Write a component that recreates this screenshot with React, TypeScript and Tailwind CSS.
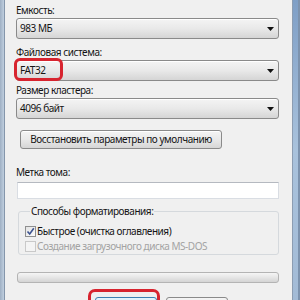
import React from "react";

function Combo({ value, children }: { value: string; children?: React.ReactNode }) {
  return (
    <div className="relative flex h-[21px] items-center rounded-[3px] border border-[#8a8a8a] bg-gradient-to-b from-[#f4f4f4] via-[#e9e9e9] to-[#d5d5d5] pl-[3px] shadow-[inset_0_1px_0_#ffffff]">
      <span>{value}</span>
      <svg className="ml-auto mr-[4px]" width="7" height="4" viewBox="0 0 7 4">
        <path d="M0 0h7L3.5 4z" fill="#111" />
      </svg>
      {children}
    </div>
  );
}

function Label({ text, className }: { text: string; className?: string }) {
  return <div className={`h-[15px] leading-[15px] ${className ?? ""}`}>{text}</div>;
}

function CheckRow({ label, checked, disabled }: { label: string; checked?: boolean; disabled?: boolean }) {
  return (
    <div className="flex h-[13px] items-center">
      <div
        className={
          disabled
            ? "h-[11px] w-[11px] border border-[#c9c9c9] bg-[#f4f4f4]"
            : "flex h-[11px] w-[11px] items-center justify-center border border-[#8f8f8f] bg-gradient-to-br from-[#e4e4e4] to-[#fafafa]"
        }
      >
        {checked && (
          <svg width="9" height="9" viewBox="0 0 9 9">
            <path d="M1.5 4.5 L3.7 7 L7.8 1.3" fill="none" stroke="#3d5390" strokeWidth="1.6" />
          </svg>
        )}
      </div>
      <span className={`ml-[1px] ${disabled ? "text-[#a3a3a3]" : ""}`}>{label}</span>
    </div>
  );
}

export default function App() {
  return (
    <div className="flex h-[300px] w-[300px] overflow-hidden bg-[#f0f0f0] font-['Noto_Sans',sans-serif] text-[10px] tracking-[-0.45px] text-[#141414]">
      {/* left window frame */}
      <div className="flex w-[5px] shrink-0">
        <div className="w-[4px] bg-gradient-to-r from-[#9fb0c4] to-[#c0cfdf]" />
        <div className="w-[1px] bg-[#8596ab]" />
      </div>

      <div className="flex min-w-0 flex-1 flex-col pl-[11px] pr-[13px] *:shrink-0">
        <Label text="Емкость:" className="mt-[3px]" />
        <Combo value="983 МБ" />

        <Label text="Файловая система:" className="mt-[6px]" />
        <Combo value="FAT32">
          <div className="absolute left-[-3px] top-[-3px] h-[23px] w-[49px] rounded-[6px] border-[3px] border-[#d7242f]" />
        </Combo>

        <Label text="Размер кластера:" className="mt-[2px]" />
        <Combo value="4096 байт" />

        <button className="ml-[4px] mt-[11px] flex h-[19px] w-[202px] items-center justify-center rounded-[3px] border border-[#8a8a8a] bg-gradient-to-b from-[#f4f4f4] via-[#e9e9e9] to-[#d6d6d6] shadow-[inset_0_1px_0_#ffffff]">
          Восстановить параметры по умолчанию
        </button>

        <Label text="Метка тома:" className="mt-[16px]" />
        <div className="ml-[1px] mt-[2px] h-[17px] border border-[#d9dde3] border-t-[#b5b9c0] bg-white" />

        <fieldset className="ml-[2px] mt-[5px] rounded-[3px] border border-[#d5d9dd] pb-[1px] pl-[6px]">
          <legend className="ml-[5px] h-[15px] px-[1px] leading-[15px]">Способы форматирования:</legend>
          <div className="mt-[6px] flex flex-col gap-[2px]">
            <CheckRow label="Быстрое (очистка оглавления)" checked />
            <CheckRow label="Создание загрузочного диска MS-DOS" disabled />
          </div>
        </fieldset>

        <div className="ml-[1px] mt-[17px] h-[11px] rounded-[3px] border border-[#b4b4b4] bg-gradient-to-b from-[#f6f6f6] via-[#e6e6e6] to-[#d4d4d4]" />

        {/* Start / Close buttons, only their top edge is in view */}
        <div className="mt-[14px] flex">
          <div className="relative ml-[79px]">
            <button className="h-[23px] w-[62px] rounded-[3px] border border-[#3c7fb1] bg-gradient-to-b from-[#e5f4fc] to-[#a7d9f5]" />
            <div className="absolute left-[-7px] top-[-8px] h-[30px] w-[72px] rounded-[7px] border-[3px] border-[#d7242f]" />
          </div>
          <button className="ml-[9px] h-[23px] w-[62px] rounded-[3px] border border-[#8a8a8a] bg-gradient-to-b from-[#f4f4f4] to-[#dadada]" />
        </div>
      </div>

      {/* right window frame */}
      <div className="flex w-[8px] shrink-0">
        <div className="w-[1px] bg-[#8c9db2]" />
        <div className="w-[5px] bg-gradient-to-b from-[#7f9fc6] via-[#a9c2dc] to-[#a3bbd6]" />
        <div className="w-[2px] bg-[#7d93ae]" />
      </div>
    </div>
  );
}
